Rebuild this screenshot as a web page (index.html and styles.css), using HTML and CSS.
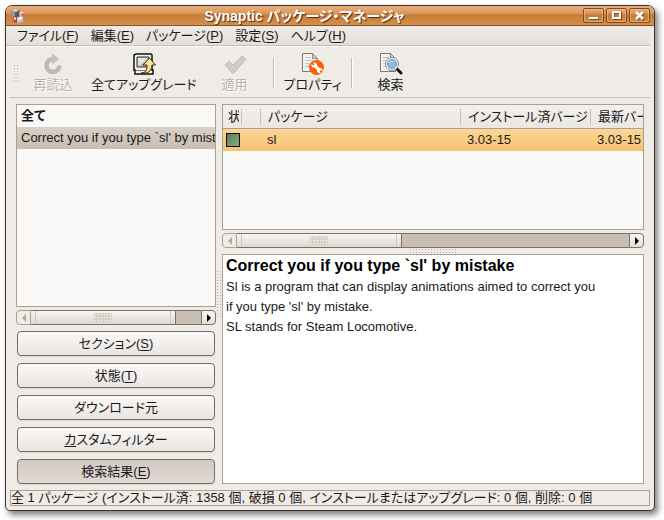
FILE: index.html
```html
<!DOCTYPE html>
<html lang="ja">
<head>
  <meta charset="UTF-8">
  <meta name="viewport" content="width=device-width, initial-scale=1.0">
  <title>Synaptic パッケージ・マネージャ</title>
  <link rel="stylesheet" href="styles.css">
</head>
<body>
  <div class="window">
    <header class="titlebar">
      <svg viewBox="0 0 16 16" width="16" height="16">
        <path d="M1 3l4-2 5 1v7l-5 1-3-2z" fill="#5a5654"/>
        <path d="M1 3l4-2 5 1-4 2z" fill="#d8d4d0"/>
        <path d="M1 3l4 1v6l-3-1z" fill="#9c9894"/>
        <path d="M9 4l3-1 3 3-1 4-4 1z" fill="#f0c4ba"/>
        <path d="M11 6l4-1v5l-3 1z" fill="#cf6a5e"/>
        <path d="M3 8l4 1v6l-3-1z" fill="#c8392f"/>
        <path d="M4 9l2 1v2l-2-1z" fill="#fff"/>
        <path d="M7 9l6-1v6l-6 1z" fill="#b9c2d0"/>
        <path d="M8 10l4-1v2l-4 1z" fill="#fff"/>
      </svg>
      <h1>Synaptic パッケージ・マネージャ</h1>
      <div class="window-buttons">
        <button type="button" aria-label="最小化"><svg viewBox="0 0 19 13" width="19" height="13"><path d="M5 8h9v2H5z" fill="#fff"/></svg></button>
        <button type="button" aria-label="最大化"><svg viewBox="0 0 19 13" width="19" height="13"><path d="M6 3h7v6H6z" fill="none" stroke="#fff" stroke-width="2"/></svg></button>
        <button type="button" aria-label="閉じる"><svg viewBox="0 0 19 13" width="19" height="13"><path d="M6 3l7 7M13 3l-7 7" fill="none" stroke="#fff" stroke-width="2.500"/></svg></button>
      </div>
    </header>

    <nav class="menubar">
      <button type="button">ファイル(<u>F</u>)</button>
      <button type="button">編集(<u>E</u>)</button>
      <button type="button">パッケージ(<u>P</u>)</button>
      <button type="button">設定(<u>S</u>)</button>
      <button type="button">ヘルプ(<u>H</u>)</button>
    </nav>

    <div class="toolbar">
      <span class="handle"></span>
      <button type="button" disabled>
        <svg viewBox="0 0 24 24" width="24" height="24">
          <path d="M18.500 13.500a6.500 6.500 0 1 1-6.500-6.500" fill="none" stroke="#bcbab7" stroke-width="4.500"/>
          <path d="M11 1l7 6-7 6z" fill="#c4c2bf"/>
        </svg>
        再読込
      </button>
      <button type="button">
        <svg viewBox="0 0 24 24" width="24" height="24">
          <path d="M4 2h15l1 1v15h1v4H3v-4H2V3z" fill="#f4f4f2" stroke="#111" stroke-width="1.500"/>
          <path d="M5 5h12v10H5z" fill="#b6bab5" stroke="#333"/>
          <path d="M6 6h10l-9 8H6z" fill="#e3e6e2"/>
          <path d="M4 18.500h15" stroke="#777"/>
          <path d="M9 21c5 0 6-3 6-8h-4l6.500-7 6 7H20c0 6-4 9-11 8z" fill="#fbe297" stroke="#3b2e0c"/>
        </svg>
        全てアップグレード
      </button>
      <button type="button" disabled>
        <svg viewBox="0 0 24 24" width="24" height="24">
          <path d="M2 13l4-4 4 4 9-9 4 3-12 14h-2z" fill="#cfcdca" stroke="#c0bdba"/>
        </svg>
        適用
      </button>
      <span class="separator"></span>
      <button type="button">
        <svg viewBox="0 0 24 24" width="24" height="24">
          <path d="M1.500 1.500h10l5 5v13h-15z" fill="#f3f3f2" stroke="#777a78"/>
          <path d="M11.500 1.500v5h5z" fill="#d1d2d0" stroke="#888"/>
          <path d="M4 5.500h6M4 8.500h9M4 11.500h5M4 14.500h4" stroke="#c4c4c2"/>
          <circle cx="15.500" cy="15.500" r="7.500" fill="#f46407"/>
          <path d="M10.500 12l2 1.500 1-1-1.500-2c2-.500 4.500.500 4 3l2.500 2.500c2.500-.500 3.500 1.500 3 3.500l-2-1.500-1 1 1.500 2c-2 .500-4.500-.500-4-3l-2.500-2.500c-2 .500-3.500-1.500-3-3.500z" fill="#fff"/>
        </svg>
        プロパティ
      </button>
      <span class="separator"></span>
      <button type="button">
        <svg viewBox="0 0 24 24" width="24" height="24">
          <path d="M1.500 1.500h10l5 5v13h-15z" fill="#f3f3f2" stroke="#777a78"/>
          <path d="M11.500 1.500v5h5z" fill="#d1d2d0" stroke="#888"/>
          <path d="M4 5.500h6M4 8.500h3M4 11.500h2M4 14.500h3" stroke="#c4c4c2"/>
          <path d="M18 17l4 4" stroke="#111" stroke-width="3" stroke-linecap="round"/>
          <circle cx="13" cy="12" r="6.500" fill="#f8f8f8" stroke="#858988"/>
          <circle cx="13" cy="12" r="4.500" fill="#8dbbdc" stroke="#6b93b0"/>
          <path d="M10 12c0-4 4-4 5-2-2-1-4 0-5 2z" fill="#d9edf8"/>
        </svg>
        検索
      </button>
    </div>

    <main class="content">
      <aside class="sidebar">
        <ul class="filter-list">
          <li class="all">全て</li>
          <li class="selected">Correct you if you type `sl' by mistake</li>
        </ul>
        <div class="scrollbar">
          <button type="button" aria-label="左へ" disabled><svg viewBox="0 0 6 8" width="6" height="8"><path d="M5 0v8L1 4z"/></svg></button>
          <div class="trough"><div class="thumb" style="width: 85%"><span class="grip"></span></div></div>
          <button type="button" aria-label="右へ"><svg viewBox="0 0 6 8" width="6" height="8"><path d="M1 0v8l4-4z"/></svg></button>
        </div>
        <div class="views">
          <button type="button">セクション(<u>S</u>)</button>
          <button type="button">状態(<u>T</u>)</button>
          <button type="button">ダウンロード元</button>
          <button type="button"><u>カ</u>スタムフィルター</button>
          <button type="button" class="active">検索結果(<u>E</u>)</button>
        </div>
      </aside>

      <div class="splitter"><span class="dots tall"></span></div>

      <section class="packages">
        <div class="table-box">
          <table>
            <colgroup>
              <col class="col-status"><col class="col-mark"><col class="col-name"><col class="col-installed"><col>
            </colgroup>
            <thead>
              <tr>
                <th><span>状態</span></th>
                <th></th>
                <th><span>パッケージ</span></th>
                <th><span>インストール済バージョン</span></th>
                <th><span>最新バージョン</span></th>
              </tr>
            </thead>
            <tbody>
              <tr>
                <td class="status"><i></i></td>
                <td></td>
                <td>sl</td>
                <td>3.03-15</td>
                <td>3.03-15</td>
              </tr>
            </tbody>
          </table>
        </div>
        <div class="scrollbar">
          <button type="button" aria-label="左へ" disabled><svg viewBox="0 0 6 8" width="6" height="8"><path d="M5 0v8L1 4z"/></svg></button>
          <div class="trough"><div class="thumb" style="width: 42%"><span class="grip"></span></div></div>
          <button type="button" aria-label="右へ"><svg viewBox="0 0 6 8" width="6" height="8"><path d="M1 0v8l4-4z"/></svg></button>
        </div>
        <div class="splitter horizontal"><span class="dots wide"></span></div>
        <article class="description">
          <h2>Correct you if you type `sl' by mistake</h2>
          <p>Sl is a program that can display animations aimed to correct you<br>if you type 'sl' by mistake.</p>
          <p>SL stands for Steam Locomotive.</p>
        </article>
      </section>
    </main>

    <footer class="statusbar">全 1 パッケージ (インストール済: 1358 個, 破損 0 個, インストールまたはアップグレード: 0 個, 削除: 0 個</footer>
  </div>
</body>
</html>
```

FILE: styles.css
```css
:root {
  --bg: #efebe7;
  --pane: #faf9f7;
  --line: #ad9f90;
  --dark-line: #7c7060;
  --text: #1a1a1a;
}

* {
  box-sizing: border-box;
}

body {
  margin: 0;
  padding: 5px 9px 9px 5px;
  height: 100vh;
  display: flex;
  background: #fff;
  color: var(--text);
  font-family: "Liberation Sans", "Noto Sans CJK JP", sans-serif;
  font-size: 13px;
  line-height: 20px;
  font-feature-settings: "palt";
}

button {
  font: inherit;
  font-feature-settings: inherit;
  color: inherit;
  background: none;
  border: none;
  margin: 0;
  padding: 0;
  white-space: nowrap;
}

u {
  text-underline-offset: 2px;
}

.window {
  flex: 1;
  min-width: 0;
  display: flex;
  flex-direction: column;
  background: var(--bg);
  border: 1px solid #3a3530;
  border-radius: 7px 7px 5px 5px;
  box-shadow: 3px 4px 6px rgba(0,0,0,0.5);
  overflow: hidden;
}

/* title bar */
.titlebar {
  height: 20px;
  display: flex;
  align-items: center;
  padding: 0 4px;
  background: linear-gradient(#e8ae7c, #dc9a5f 35%, #c77d35 50%, #d5914f);
  border-bottom: 1px solid #8a5524;
}

.titlebar h1 {
  flex: 1;
  margin: 0;
  text-align: center;
  font-size: 14px;
  color: #fff;
  text-shadow: 1px 1px 1px #4a2a0c;
}

.window-buttons {
  display: flex;
  gap: 2px;
}

.window-buttons button {
  width: 21px;
  height: 15px;
  border: 1px solid #7d4b20;
  border-radius: 2px;
  box-shadow: inset 0 0 0 1px rgba(255,220,180,0.4);
}

.window-buttons svg {
  display: block;
  filter: drop-shadow(1px 1px 0 #7d4b20);
}

/* menu bar */
.menubar {
  height: 20px;
  display: flex;
  gap: 12px;
  margin: 0 4px 0 0;
  padding: 0 11px;
  background: linear-gradient(#efebe7, #e5dfda);
  border-bottom: 1px solid #cbbdb5;
}

/* toolbar */
.toolbar {
  height: 52px;
  display: flex;
  align-items: center;
  gap: 8px;
  margin: 0 4px 0 3px;
  padding: 2px 4px 0;
  border-top: 1px solid #fff;
  border-bottom: 1px solid #cbbdb5;
}

.toolbar button {
  min-width: 60px;
  display: flex;
  flex-direction: column;
  align-items: center;
  line-height: 18px;
}

.toolbar button:disabled {
  color: #bdb1a8;
  text-shadow: 1px 1px 0 #fff;
}

.handle {
  width: 6px;
  height: 18px;
  margin-right: -4px;
  background: radial-gradient(circle, #c0b6ac 1px, transparent 1px) 0 0 / 3px 3px;
}

.separator {
  width: 2px;
  height: 30px;
  border-left: 1px solid #c4bab0;
  background: #fff;
}

/* panes */
.content {
  flex: 1;
  min-height: 0;
  display: flex;
  padding: 6px 10px 6px 10px;
}

.sidebar {
  width: 200px;
  display: flex;
  flex-direction: column;
}

.filter-list {
  flex: 1;
  margin: 0 0 3px;
  padding: 0;
  list-style: none;
  background: var(--pane);
  border: 1px solid var(--line);
  overflow: hidden;
}

.filter-list li {
  padding: 0 4px;
  line-height: 22px;
  white-space: nowrap;
}

.filter-list .all {
  font-weight: bold;
}

.filter-list .selected {
  background: linear-gradient(#d9d0c8, #c8bdb2);
}

.scrollbar {
  height: 15px;
  display: flex;
}

.scrollbar button {
  width: 15px;
  display: flex;
  align-items: center;
  justify-content: center;
  border: 1px solid var(--dark-line);
  border-radius: 0 4px 4px 0;
  background: linear-gradient(#f8f6f4, #e4deda);
}

.scrollbar button:disabled {
  border-color: var(--line);
  border-radius: 4px 0 0 4px;
  background: var(--bg);
  fill: #b5a99c;
}

.trough {
  flex: 1;
  background: #c9beb4;
  border: solid var(--dark-line);
  border-width: 1px 0;
}

.thumb {
  height: 100%;
  display: flex;
  align-items: center;
  justify-content: center;
  background:
    linear-gradient(90deg, transparent 4px, #d1c7be 4px, #d1c7be 5px, transparent 5px, transparent calc(100% - 5px), #d1c7be calc(100% - 5px), #d1c7be calc(100% - 4px), transparent 0),
    linear-gradient(#f7f5f3, #ded8d3);
  border-right: 1px solid var(--dark-line);
}

.grip {
  width: 18px;
  height: 9px;
  background:
    radial-gradient(circle, #fff 1px, transparent 1px) 0 0 / 3px 3px,
    #d8d1ca;
}

.views {
  display: flex;
  flex-direction: column;
  gap: 7px;
  margin: 6px 1px 0;
}

.views button {
  height: 25px;
  border: 1px solid #766d60;
  border-radius: 4px;
  background: linear-gradient(#faf9f8, #e9e4e0);
  box-shadow: 0 1px 0 #dcd6d0;
}

.views .active {
  background: linear-gradient(#d3c9c4, #e0d8d3);
}

.splitter {
  width: 6px;
  display: flex;
  align-items: center;
  justify-content: center;
}

.splitter.horizontal {
  width: auto;
  height: 6px;
}

.dots {
  background: radial-gradient(circle, #b5aba0 1px, transparent 1px) 0 0 / 3px 3px;
}

.dots.tall {
  width: 6px;
  height: 48px;
}

.dots.wide {
  width: 48px;
  height: 6px;
}

.packages {
  flex: 1;
  min-width: 0;
  display: flex;
  flex-direction: column;
}

.table-box {
  height: 126px;
  margin-bottom: 3px;
  background: var(--pane);
  border: 1px solid var(--line);
  overflow: hidden;
}

table {
  width: 100%;
  min-width: 480px;
  table-layout: fixed;
  border-collapse: separate;
  border-spacing: 0;
}

.col-status,
.col-mark {
  width: 19px;
}

.col-name {
  width: 200px;
}

.col-installed {
  width: 130px;
}

th {
  height: 24px;
  padding: 0 4px 0 7px;
  font-weight: normal;
  text-align: left;
  background:
    linear-gradient(#c9c0b8, #c9c0b8) right center / 1px 16px no-repeat,
    linear-gradient(#f2efec, #ebe7e3);
  border-bottom: 1px solid var(--line);
}

th:first-child {
  padding: 0 3px 0 5px;
}

th span {
  display: block;
  overflow: hidden;
  white-space: nowrap;
}

td {
  height: 22px;
  padding: 0 6px;
  background: linear-gradient(#fdd596, #f5c272);
}

.status {
  padding: 0 3px;
}

.status i {
  display: block;
  width: 14px;
  height: 14px;
  border: 1px solid #111;
  background: linear-gradient(135deg, #5c7d5c, #86a982);
}

.description {
  flex: 1;
  padding: 0 3px;
  background: #fff;
  border: 1px solid var(--line);
}

.description h2 {
  margin: 0;
  font-size: 16px;
  line-height: 22px;
  color: #000;
}

.description p {
  margin: 0;
}

.statusbar {
  height: 16px;
  margin: 0 4px 4px;
  border: 1px solid var(--line);
  line-height: 14px;
  white-space: nowrap;
}
```
